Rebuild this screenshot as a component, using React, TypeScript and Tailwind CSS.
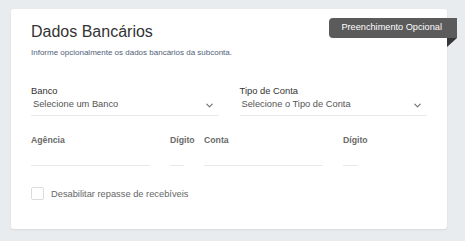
import { ChevronDown } from "lucide-react";

const font = "font-['Liberation_Sans',Arial,sans-serif]";

function SelectField({ label, placeholder }: { label: string; placeholder: string }) {
  return (
    <div className="flex flex-col">
      <div className="h-[12px] text-[9.4px] leading-[12px] text-[#333]">{label}</div>
      <div className="flex h-[19px] items-start justify-between border-b border-[#e9e9e9]">
        <span className="pl-[2px] text-[9.3px] leading-[14px] text-[#555]">{placeholder}</span>
        <ChevronDown className="mr-[4px] mt-[2.5px] h-[11px] w-[11px] text-[#707070]" strokeWidth={2.4} />
      </div>
    </div>
  );
}

function TextField({ label, width }: { label: string; width: string }) {
  return (
    <div className={`flex shrink-0 flex-col ${width}`}>
      <div className="h-[12px] whitespace-nowrap text-[8.7px] font-bold leading-[12px] text-[#6a6a6a]">
        {label}
      </div>
      <div className="h-[20px] border-b border-[#e9e9e9]" />
    </div>
  );
}

export default function App() {
  return (
    <div className={`h-[241px] w-[465px] bg-[#e9ecef] pl-[11px] pt-[9px] ${font}`}>
      <div className="relative h-[220px] w-[436px] rounded-[3px] bg-white px-5 pt-[13px] shadow-[0_1px_2px_rgba(0,0,0,0.08)]">
        <div className="absolute right-[-10px] top-[8.5px]">
          <div className="flex h-[20.5px] items-center rounded-l-[4px] bg-[#5b5b5b] pl-[12px] pr-[15px] text-[9.2px] text-white">
            Preenchimento Opcional
          </div>
          <div className="ml-auto h-0 w-0 border-r-[10px] border-t-[9px] border-r-transparent border-t-[#363636]" />
        </div>

        <h2 className="text-[16px] leading-[20px] text-[#333]">Dados Bancários</h2>
        <p className="mt-[5px] text-[8px] leading-[12px] text-[#4f6178]">
          Informe opcionalmente os dados bancários da subconta.
        </p>

        <div className="mt-[26px] grid grid-cols-2 gap-x-[21px]">
          <SelectField label="Banco" placeholder="Selecione um Banco" />
          <SelectField label="Tipo de Conta" placeholder="Selecione o Tipo de Conta" />
        </div>

        <div className="mt-[18px] flex gap-5">
          <TextField label="Agência" width="w-[119px]" />
          <TextField label="Dígito" width="w-[14px]" />
          <TextField label="Conta" width="w-[119px]" />
          <TextField label="Dígito" width="w-[15px]" />
        </div>

        <label className="mt-[21px] flex items-center gap-[7px]">
          <span className="h-[13px] w-[13px] rounded-[2px] border border-[#dcdcdc] bg-white" />
          <span className="text-[9.3px] leading-[12px] text-[#666]">Desabilitar repasse de recebíveis</span>
        </label>
      </div>
    </div>
  );
}
